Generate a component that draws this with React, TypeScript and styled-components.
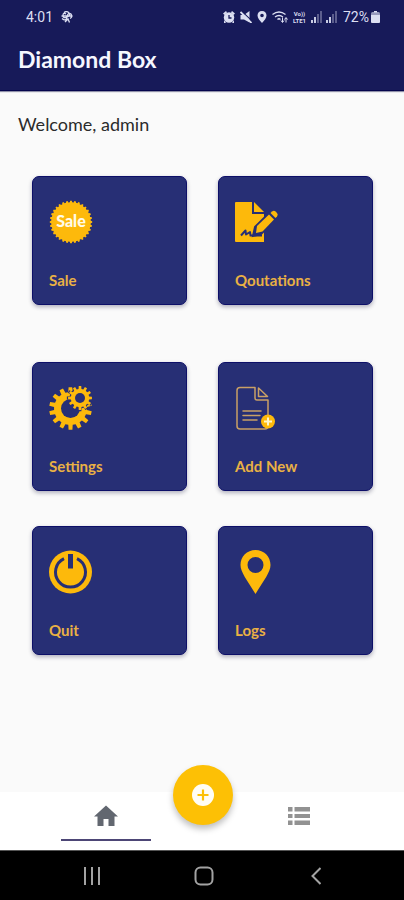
import React from "react";
import styled, { createGlobalStyle } from "styled-components";

const GOLD = "#fdb90b";
const CARD = "#272f75";

const GlobalStyle = createGlobalStyle`
  *, *::before, *::after { box-sizing: border-box; }
  body { margin: 0; background: #fafafa; font-family: Lato, "Open Sans", sans-serif; }
  button { font: inherit; color: inherit; border: 0; padding: 0; background: none; cursor: pointer; }
  svg { display: block; flex: none; }
`;

const Screen = styled.div`
  min-height: 100vh;
  display: flex;
  flex-direction: column;
`;

const Header = styled.header`
  background: #171a59;
  color: #f6f7ff;
  border-bottom: 1px solid #05054c;
  box-shadow: 0 1px 1px #8f90a8;
`;

const StatusBar = styled.div`
  height: 34px;
  padding: 0 24px 0 26px;
  display: flex;
  align-items: center;
  justify-content: space-between;
  color: #dcdff2;
  font-family: Roboto, sans-serif;
  font-size: 14px;
  line-height: 16px;
`;

const StatusGroup = styled.div<{ $gap: number }>`
  display: flex;
  align-items: center;
  gap: ${(p) => p.$gap}px;
`;

const VolteMark = styled.span`
  display: grid;
  font-size: 6px;
  line-height: 7px;
  font-weight: 700;
  text-align: center;
`;

const Battery = styled.span`
  display: flex;
  align-items: center;
  gap: 2px;
`;

const Title = styled.h1`
  margin: 0;
  padding: 10px 18px 16px;
  font-size: 23px;
  line-height: 30px;
  font-weight: 700;
`;

const Main = styled.main`
  flex: 1;
  padding: 19px 31px 32px 32px;
`;

const Welcome = styled.p`
  margin: 0 0 38px -14px;
  font-size: 18px;
  line-height: 28px;
  color: #2b2b2b;
`;

const CardRow = styled.div<{ $space?: number }>`
  display: grid;
  grid-template-columns: 1fr 1fr;
  column-gap: 31px;
  margin-bottom: ${(p) => p.$space ?? 0}px;
`;

const Card = styled.button`
  display: flex;
  flex-direction: column;
  align-items: flex-start;
  gap: 26px;
  padding: 23px 16px 14px;
  border: 1px solid #0d0f68;
  border-radius: 7px;
  background: ${CARD};
  box-shadow: 0 2px 4px rgba(20, 20, 60, 0.32);
`;

const CardLabel = styled.span`
  font-size: 15px;
  line-height: 20px;
  font-weight: 700;
  color: #e9b144;
`;

const TabBar = styled.nav`
  height: 58px;
  display: grid;
  grid-template-columns: repeat(3, 24%);
  justify-content: center;
  justify-items: center;
  padding-left: 1px;
  background: #fff;
`;

const Tab = styled.button<{ $active?: boolean; $color: string }>`
  width: 90px;
  height: 49px;
  display: flex;
  align-items: center;
  justify-content: center;
  border-bottom: 2px solid ${(p) => (p.$active ? "#4d4676" : "transparent")};
  color: ${(p) => p.$color};
`;

const AddButton = styled.button`
  width: 60px;
  height: 60px;
  margin-top: -27px;
  display: grid;
  place-items: center;
  border-radius: 50%;
  background: #fdc005;
  box-shadow: 0 4px 6px rgba(0, 0, 0, 0.25);
`;

const SystemBar = styled.nav`
  height: 50px;
  padding-left: 4px;
  display: grid;
  grid-template-columns: repeat(3, 28%);
  justify-content: center;
  align-items: center;
  background: #000;
  border-top: 1px solid #555;
`;

const SystemButton = styled.button`
  height: 48px;
  display: grid;
  place-items: center;
`;

function gear(cx: number, cy: number, outer: number, root: number, teeth: number, turn = 0) {
  const step = (Math.PI * 2) / teeth;
  const at = (r: number, a: number) =>
    `${(cx + r * Math.cos(a)).toFixed(2)} ${(cy + r * Math.sin(a)).toFixed(2)}`;
  const points: string[] = [];
  for (let i = 0; i < teeth; i++) {
    const a = i * step + turn;
    points.push(
      at(root, a - step * 0.3),
      at(outer, a - step * 0.2),
      at(outer, a + step * 0.2),
      at(root, a + step * 0.3)
    );
  }
  return `M${points.join("L")}Z`;
}

const CardIcon = ({ children }: { children: React.ReactNode }) => (
  <svg width="44" height="44" viewBox="0 0 44 44" fill={GOLD} aria-hidden="true">
    {children}
  </svg>
);

const SaleIcon = () => (
  <CardIcon>
    <path d={gear(22, 22, 21.2, 19.8, 32)} />
    <text x="22" y="27" textAnchor="middle" fill="#fffbe8" fontFamily="Lato, sans-serif" fontWeight="900" fontSize="16">
      Sale
    </text>
  </CardIcon>
);

const QuotationIcon = () => (
  <CardIcon>
    <path d="M1 2H17V14H29V42H1Q0 42 0 41V3Q0 2 1 2Z" />
    <path d="M19 2 29 12H19Z" />
    <path d="M20 27 36 11 43 17 26 34 18 36Z" fill={CARD} stroke={CARD} strokeWidth="2" />
    <path d="M22 26 34 14.500 39 19.500 27.500 31.500 21 33Z" />
    <path d="M35.500 13 37 11.500Q39 10 40.500 11.500L42 13Q43.500 14.500 42 16.500L40.500 18Z" />
    <path d="M6 35.500 10.500 30.500 11 34.500 15 32 15.500 35.500H27" fill="none" stroke={CARD} strokeWidth="2" strokeLinejoin="round" />
  </CardIcon>
);

const SettingsIcon = () => (
  <CardIcon>
    <path d={gear(21.5, 22.5, 21.4, 16.5, 14, Math.PI / 14)} />
    <circle cx="21.500" cy="22.500" r="9.500" fill={CARD} />
    <path d={gear(31, 12, 13.2, 10.5, 12)} fill={CARD} />
    <path d={gear(31, 12, 12, 9.2, 12)} />
    <circle cx="31" cy="12" r="5" fill={CARD} />
  </CardIcon>
);

const AddNewIcon = () => (
  <CardIcon>
    <g fill="none" stroke="#c9a066" strokeWidth="1.500" strokeLinejoin="round" strokeLinecap="round">
      <path d="M33 29V14H22Q20 14 20 12V1.500H5Q2 1.500 2 4.500V40Q2 43 5 43H30Q33 43 33 40" />
      <path d="M23.500 2V10.500H32.500Z" />
      <path d="M8 25H26M8 29.500H25M8 34H22" />
    </g>
    <circle cx="33" cy="35.500" r="7" />
    <path d="M33 31.500V39.500M29 35.500H37" stroke="#fff6c8" strokeWidth="2" />
  </CardIcon>
);

const QuitIcon = () => (
  <CardIcon>
    <circle cx="21.500" cy="22" r="21.500" />
    <path d="M15 8.600A15 15 0 1 0 28 8.600" fill="none" stroke={CARD} strokeWidth="3" />
    <path d="M21.500 4V18.500" stroke={CARD} strokeWidth="5" />
  </CardIcon>
);

const LogsIcon = () => (
  <CardIcon>
    <path
      fillRule="evenodd"
      d="M20.500 0C12 0 5.500 6.500 5.500 15C5.500 22 12 30 20.500 44C29 30 35.500 22 35.500 15C35.500 6.500 29 0 20.500 0ZM20.500 7A8 8 0 1 1 20.500 23A8 8 0 1 1 20.500 7Z"
    />
  </CardIcon>
);

const Signal = ({ level }: { level: number }) => (
  <svg width="12" height="12" viewBox="0 0 12 12" fill="currentColor" aria-hidden="true">
    {[0, 1, 2, 3].map((i) => (
      <rect key={i} x={i * 3} y={9 - i * 3} width="2" height={3 + i * 3} opacity={i < level ? 0.9 : 0.35} />
    ))}
  </svg>
);

const StatusIcons = () => (
  <>
    <svg width="12" height="12" viewBox="0 0 12 12" aria-hidden="true">
      <path d="M0 2.500 3 0 4 1.500 1.500 4ZM12 2.500 9 0 8 1.500 10.500 4Z" fill="currentColor" />
      <path d="M1 9 1 12H3ZM11 9 11 12H9Z" fill="currentColor" />
      <circle cx="6" cy="6.500" r="5.200" fill="currentColor" />
      <path d="M6 4V7H8.500" fill="none" stroke="#171a59" strokeWidth="1.300" />
    </svg>
    <svg width="12" height="12" viewBox="0 0 12 12" aria-hidden="true">
      <path d="M0.500 4H4L9.500 0V11.500L4 8.500H0.500Z" fill="currentColor" />
      <path d="M1 -0.500 12.500 10.500" stroke="#171a59" strokeWidth="1.200" />
      <path d="M0.500 1 11.500 12" stroke="currentColor" strokeWidth="1.800" />
    </svg>
    <svg width="10" height="12" viewBox="0 0 10 12" fill="currentColor" aria-hidden="true">
      <path
        fillRule="evenodd"
        d="M5 0C2.200 0 0.500 2 0.500 4.500C0.500 7 3 10 5 12C7 10 9.500 7 9.500 4.500C9.500 2 7.800 0 5 0ZM5 2.700A1.800 1.800 0 1 1 5 6.300A1.800 1.800 0 1 1 5 2.700Z"
      />
    </svg>
    <svg width="16" height="12" viewBox="0 0 16 12" fill="none" stroke="currentColor" strokeWidth="1.300" aria-hidden="true">
      <path d="M0.500 3.500Q7 -1.500 13.500 3.500M3 6Q7 3 11 6M5.500 8.500Q7 7 8.500 8.500" />
      <path d="M10.500 6.500V11M9 9.500 10.500 11.500 12 9.500M14 11.500V7M12.500 8.500 14 6.500 15.500 8.500" strokeWidth="1" />
    </svg>
  </>
);

const cardRows = [
  { space: 57, cards: [["Sale", SaleIcon], ["Qoutations", QuotationIcon]] },
  { space: 35, cards: [["Settings", SettingsIcon], ["Add New", AddNewIcon]] },
  { space: 0, cards: [["Quit", QuitIcon], ["Logs", LogsIcon]] },
] as { space: number; cards: [string, React.ComponentType][] }[];

export default function App() {
  return (
    <Screen>
      <GlobalStyle />
      <Header>
        <StatusBar>
          <StatusGroup $gap={8}>
            <span>4:01</span>
            <svg width="12" height="12" viewBox="0 0 12 12" fill="none" stroke="currentColor" strokeWidth="1.300" aria-hidden="true">
              <path d="M3 1.500Q6 -0.500 8 2T6 6Q2 8 2 4.500T5 3M1 7.500Q5 11 6 6T10 3Q12 6 9 7.500M4 11 7 8 8.500 11.500M0.500 5H11.500" />
            </svg>
          </StatusGroup>
          <StatusGroup $gap={5}>
            <StatusIcons />
            <VolteMark>
              <span>Vo))</span>
              <span>LTE1</span>
            </VolteMark>
            <StatusGroup $gap={3}>
              <Signal level={2} />
              <Signal level={2} />
            </StatusGroup>
            <Battery>
              <span>72%</span>
              <svg width="9" height="12" viewBox="0 0 9 12" fill="currentColor" aria-hidden="true">
                <path d="M3 0H6V1.500H3Z" />
                <rect y="1" width="9" height="11" rx="1.500" opacity="0.650" />
                <path d="M0 4H9V10.500Q9 12 7.500 12H1.500Q0 12 0 10.500Z" />
              </svg>
            </Battery>
          </StatusGroup>
        </StatusBar>
        <Title>Diamond Box</Title>
      </Header>
      <Main>
        <Welcome>Welcome, admin</Welcome>
        {cardRows.map((row, i) => (
          <CardRow key={i} $space={row.space}>
            {row.cards.map(([label, Icon]) => (
              <Card key={label} type="button">
                <Icon />
                <CardLabel>{label}</CardLabel>
              </Card>
            ))}
          </CardRow>
        ))}
      </Main>
      <TabBar aria-label="Sections">
        <Tab type="button" $active $color="#626770" aria-label="Home" aria-current="page">
          <svg width="24" height="22" viewBox="0 0 24 22" fill="currentColor" aria-hidden="true">
            <path d="M12 0.500 0 11.500H3.500V21H9.500V14H14.500V21H20.500V11.500H24Z" />
          </svg>
        </Tab>
        <AddButton type="button" aria-label="Add">
          <svg width="22" height="22" viewBox="0 0 22 22" aria-hidden="true">
            <circle cx="11" cy="11" r="11" fill="#fffdf5" />
            <path d="M11 5.500V16.500M5.500 11H16.500" stroke="#fdc005" strokeWidth="2.200" />
          </svg>
        </AddButton>
        <Tab type="button" $color="#929292" aria-label="List">
          <svg width="22" height="18" viewBox="0 0 22 18" fill="currentColor" aria-hidden="true">
            <path d="M0 0H4.500V4.500H0ZM6.500 0H22V4.500H6.500ZM0 7H4.500V11H0ZM6.500 7H22V11H6.500ZM0 13.500H4.500V18H0ZM6.500 13.500H22V18H6.500Z" />
          </svg>
        </Tab>
      </TabBar>
      <SystemBar aria-label="System">
        <SystemButton type="button" aria-label="Recent apps">
          <svg width="18" height="18" viewBox="0 0 18 18" stroke="#a3a3a3" strokeWidth="2" aria-hidden="true">
            <path d="M2 0V18M9 0V18M16 0V18" />
          </svg>
        </SystemButton>
        <SystemButton type="button" aria-label="Home screen">
          <svg width="20" height="20" viewBox="0 0 20 20" aria-hidden="true">
            <rect x="1.500" y="1.500" width="17" height="17" rx="5" fill="none" stroke="#a3a3a3" strokeWidth="2" />
          </svg>
        </SystemButton>
        <SystemButton type="button" aria-label="Back">
          <svg width="10" height="18" viewBox="0 0 10 18" aria-hidden="true">
            <path d="M9.500 1 1.500 9 9.500 17" fill="none" stroke="#a3a3a3" strokeWidth="2" />
          </svg>
        </SystemButton>
      </SystemBar>
    </Screen>
  );
}
